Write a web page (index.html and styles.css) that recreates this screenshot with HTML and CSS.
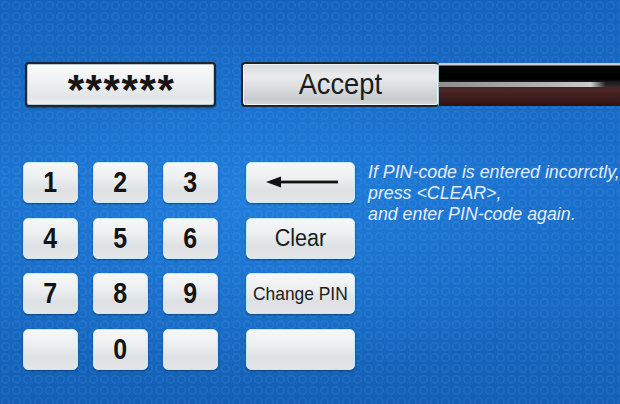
FILE: index.html
```html
<!DOCTYPE html>
<html>
<head>
<meta charset="utf-8">
<link rel="stylesheet" href="styles.css">
</head>
<body>
<div class="screen">
  <div class="top">
    <div class="pin"><span class="stars">******</span></div>
    <div class="accept-wrap">
      <div class="accept"><span class="label">Accept</span></div>
      <div class="bar"></div>
    </div>
  </div>
  <div class="bottom">
    <div class="keypad">
      <div class="key"><span class="d">1</span></div>
      <div class="key"><span class="d">2</span></div>
      <div class="key"><span class="d">3</span></div>
      <div class="key"><span class="d">4</span></div>
      <div class="key"><span class="d">5</span></div>
      <div class="key"><span class="d">6</span></div>
      <div class="key"><span class="d">7</span></div>
      <div class="key"><span class="d">8</span></div>
      <div class="key"><span class="d">9</span></div>
      <div class="key"></div>
      <div class="key"><span class="d">0</span></div>
      <div class="key"></div>
    </div>
    <div class="funcs">
      <div class="key wide">
        <svg class="arrow" width="72" height="12" viewBox="0 0 72 12">
          <polygon points="0,6 15,0.5 15,11.5" fill="#111"/>
          <rect x="13" y="4.6" width="59" height="2.8" fill="#111"/>
        </svg>
      </div>
      <div class="key wide clear"><span class="label">Clear</span></div>
      <div class="key wide change"><span class="label">Change PIN</span></div>
      <div class="key wide"></div>
    </div>
    <div class="hint">
      <div>If PIN-code is entered incorrctly,</div>
      <div>press &lt;CLEAR&gt;,</div>
      <div>and enter PIN-code again.</div>
    </div>
  </div>
</div>
</body>
</html>
```

FILE: styles.css
```css
html, body {
  margin: 0;
  padding: 0;
}
body {
  width: 620px;
  height: 404px;
  overflow: hidden;
  font-family: "Liberation Sans", Arial, sans-serif;
}
.screen {
  width: 620px;
  height: 404px;
  box-sizing: border-box;
  padding: 62px 0 0 23px;
  overflow: hidden;
  background:
    radial-gradient(circle at 5.5px 5.5px, transparent 2.6px, rgba(120,190,255,0.10) 3.2px, rgba(120,190,255,0.10) 4.2px, transparent 4.8px) 0 0 / 11px 11px,
    radial-gradient(ellipse at 40% 50%, rgba(40,140,235,0.5) 0%, rgba(40,140,235,0) 65%),
    linear-gradient(180deg, #1462bb 0%, #1a70cc 45%, #1769c2 75%, #135fb4 100%);
}
.top {
  display: flex;
  height: 45px;
}
.pin {
  margin-left: 2px;
  width: 191px;
  height: 45px;
  box-sizing: border-box;
  border: 2px solid #1b2632;
  border-radius: 4px;
  background: linear-gradient(180deg, #fafbfb 0%, #eef0f1 45%, #e2e5e7 80%, #eef0f1 100%);
  box-shadow: inset 0 0 0 1px #b9c9d3, 0 1px 2px rgba(0,0,0,0.4);
  display: flex;
  justify-content: center;
  align-items: flex-start;
}
.stars {
  font-weight: bold;
  font-size: 42px;
  line-height: 40px;
  letter-spacing: 1.6px;
  color: #151515;
  margin-top: 6px;
  margin-left: 2px;
}
.accept-wrap {
  margin-left: 25px;
  flex: 1;
  display: flex;
  height: 45px;
}
.accept {
  width: 198px;
  height: 45px;
  box-sizing: border-box;
  border: 2px solid #1e2328;
  border-right: 1px solid #a9c4cf;
  border-radius: 4px;
  background: linear-gradient(180deg, #d7dadc 0%, #e9ebec 30%, #d9dcde 60%, #c7cbce 85%, #d6d9db 100%);
  box-shadow: inset 0 0 0 1px #eef3f5;
  font-size: 29px;
  color: #1c1c1c;
  display: flex;
  align-items: center;
  justify-content: center;
}
.label {
  display: inline-block;
  transform: scaleX(0.94);
}
.accept .label {
  margin-top: -1px;
}
.bar {
  flex: 1;
  height: 43px;
  margin-top: 1px;
  background:
    linear-gradient(90deg, #8e8e8e 0%, #b4b4b4 60%, #cdcdcd 84%, rgba(40,40,40,0) 92%) 0 19px / 100% 5px no-repeat,
    linear-gradient(180deg, #c9ced2 0px, #c9ced2 2px, #060606 3px, #000 16px, #1a1a1a 19px, #3a2a2a 24px, #4c2424 27px, #3d1b1b 36px, #2b1212 43px);
}
.bottom {
  display: flex;
  margin-top: 55px;
}
.keypad {
  display: grid;
  grid-template-columns: repeat(3, 55px);
  grid-auto-rows: 41px;
  column-gap: 15px;
  row-gap: 14.7px;
}
.key {
  height: 41px;
  box-sizing: border-box;
  border: 1.5px solid #c4e9f7;
  border-radius: 5px;
  background: linear-gradient(180deg, #f6f7f8 0%, #eceeef 40%, #dee1e3 70%, #e4e6e8 100%);
  box-shadow: 0 1px 2px rgba(0,30,70,0.55);
  display: flex;
  align-items: center;
  justify-content: center;
  font-weight: bold;
  color: #131313;
}
.d {
  display: inline-block;
  font-size: 29px;
  transform: scaleX(0.86);
}
.funcs {
  margin-left: 28px;
  display: grid;
  grid-auto-rows: 41px;
  row-gap: 14.7px;
  width: 109px;
}
.wide {
  width: 109px;
}
.arrow {
  display: block;
  margin-left: 2px;
  margin-top: -1px;
}
.clear {
  font-weight: normal;
  font-size: 23px;
  color: #1b1b1b;
}
.change {
  font-weight: normal;
  font-size: 18.5px;
  color: #1b1b1b;
  white-space: nowrap;
}
.hint {
  margin-left: 13px;
  font-style: italic;
  font-size: 17.8px;
  line-height: 21px;
  color: #e3eefa;
  white-space: nowrap;
}
```
